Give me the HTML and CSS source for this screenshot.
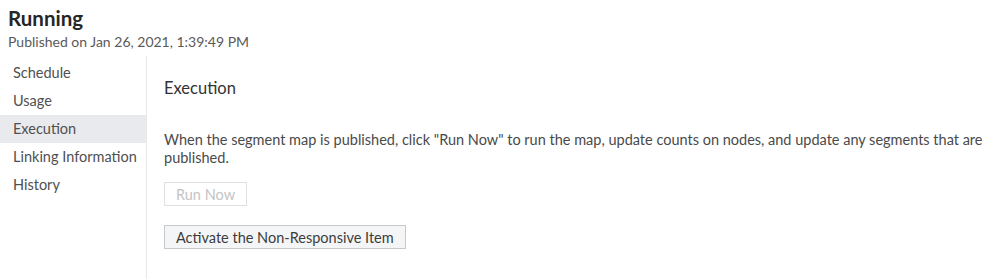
FILE: index.html
```html
<!DOCTYPE html>
<html>
<head>
<meta charset="utf-8">
<link rel="stylesheet" href="styles.css">
</head>
<body>
<header class="header">
  <h1 class="title">Running</h1>
  <div class="subtitle">Published on Jan 26, 2021, 1:39:49 PM</div>
</header>
<div class="layout">
  <nav class="nav">
    <div class="nav-item">Schedule</div>
    <div class="nav-item">Usage</div>
    <div class="nav-item active">Execution</div>
    <div class="nav-item">Linking Information</div>
    <div class="nav-item">History</div>
  </nav>
  <main class="content">
    <h2 class="section-title">Execution</h2>
    <p class="desc">When the segment map is published, click "Run Now" to run the map, update counts on nodes, and update any segments that are published.</p>
    <div class="actions">
      <button class="btn btn-disabled" disabled>Run Now</button>
      <button class="btn btn-secondary">Activate the Non-Responsive Item</button>
    </div>
  </main>
</div>
</body>
</html>
```
FILE: styles.css
```css
html, body {
  margin: 0;
  padding: 0;
  background: #fff;
  font-family: Lato, "Open Sans", sans-serif;
  color: #3d3d3d;
}
.header {
  padding: 5px 8px 0 8px;
}
.title {
  margin: 0;
  font-size: 20.5px;
  font-weight: 700;
  line-height: 26px;
  color: #262626;
}
.subtitle {
  margin-top: 2px;
  font-size: 14px;
  line-height: 18px;
  color: #5a5a5a;
}
.layout {
  display: flex;
  margin-top: 5px;
}
.nav {
  width: 146px;
  border-right: 1px solid #e8e8e8;
  padding-top: 3px;
  min-height: 220px;
}
.nav-item {
  height: 28px;
  line-height: 28px;
  padding-left: 13px;
  font-size: 14.5px;
  color: #505050;
}
.nav-item.active {
  background: #e9eaee;
}
.content {
  padding-left: 17px;
  flex: 1;
}
.section-title {
  margin: 21px 0 0 0;
  font-size: 16.5px;
  font-weight: 400;
  line-height: 22px;
  color: #333;
}
.desc {
  margin: 32px 0 0 0;
  font-size: 14.5px;
  line-height: 18px;
  color: #4a4a4a;
}
.actions {
  display: flex;
  flex-direction: column;
  align-items: flex-start;
  gap: 19px;
  margin-top: 15px;
}
.btn {
  font-family: inherit;
  font-size: 14.5px;
  height: 24px;
  padding: 0 11px;
  border: 1px solid #c8c8c8;
  background: #f4f5f7;
  color: #3d3d3d;
  border-radius: 0;
}
.btn-disabled {
  background: #fff;
  border-color: #e0e0e0;
  color: #c4c4c4;
}
```
